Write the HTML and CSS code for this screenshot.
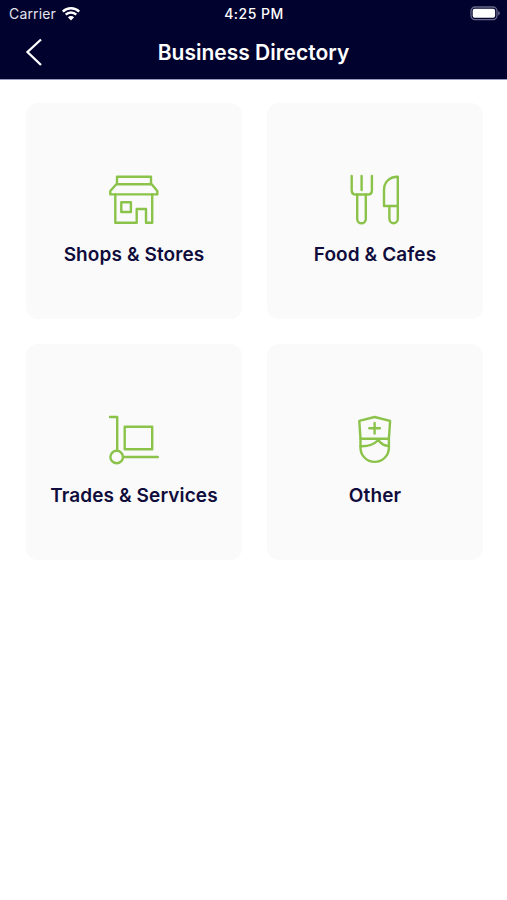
FILE: index.html
```html
<!DOCTYPE html>
<html lang="en">
<head>
  <meta charset="UTF-8">
  <meta name="viewport" content="width=device-width, initial-scale=1.0">
  <title>Business Directory</title>
  <link rel="stylesheet" href="styles.css">
</head>
<body>
  <header class="header">
    <div class="status-bar">
      <div class="carrier">
        <span>Carrier</span>
        <svg class="wifi" width="20" height="16" viewBox="0 0 20 16">
          <path d="M1.8 5.6a11.6 11.6 0 0 1 16.4 0" />
          <path d="M4.7 8.7a7.5 7.5 0 0 1 10.6 0" />
          <path class="wifi-dot" d="M6.9 11.2a4.4 4.4 0 0 1 6.2 0L10 14.4z" />
        </svg>
      </div>
      <span class="time">4:25 PM</span>
      <svg class="battery" width="31" height="15" viewBox="0 0 31 15">
        <rect class="battery-case" x="2" y="1" width="26" height="12.6" rx="4" />
        <rect class="battery-level" x="3.7" y="2.8" width="22.4" height="9" rx="2" />
        <path class="battery-cap" d="M29.2 5v4.6q1.6-.6 1.600-2.300T29.200 5z" />
      </svg>
    </div>
    <div class="nav-bar">
      <a class="back" href="#" aria-label="Back">
        <svg width="18" height="30" viewBox="0 0 18 30">
          <path d="M16 2.500L2.500 15 16 28" />
        </svg>
      </a>
      <h1>Business Directory</h1>
    </div>
  </header>

  <main class="grid">
    <a class="card" href="#">
      <svg class="icon" width="69" height="70" viewBox="0 0 69 70">
        <path d="M17 19v-7.300h34V19" />
        <path d="M16.300 19.200h35.400l5.600 6.800v3.400H10.300V26z" />
        <path d="M15.300 29.400v28.300h21.400V44h9.300v13.700h6.200V29.400" />
        <rect x="21.300" y="37.200" width="9.600" height="9.800" />
      </svg>
      <span class="label">Shops &amp; Stores</span>
    </a>
    <a class="card" href="#">
      <svg class="icon" width="69" height="70" viewBox="0 0 69 70">
        <path d="M10.700 11v14.200q0 4.300 4.300 4.300h11.600q4.300 0 4.300-4.300V11M20.600 11v14" />
        <path d="M16.200 29.500V54a4.300 4.300 0 0 0 8.600 0V29.500" />
        <path d="M56.800 41H43V25c0-7 4.500-13.300 13.800-13.300V54a4.200 4.200 0 0 1-8.400 0V41" />
      </svg>
      <span class="label">Food &amp; Cafes</span>
    </a>
    <a class="card" href="#">
      <svg class="icon" width="69" height="70" viewBox="0 0 69 70">
        <path d="M10 11h7.200v33.500" />
        <rect x="24.700" y="20.700" width="27.500" height="22.600" />
        <circle cx="16.700" cy="51" r="6.300" />
        <path d="M23 51h34.800" />
      </svg>
      <span class="label">Trades &amp; Services</span>
    </a>
    <a class="card" href="#">
      <svg class="icon" width="69" height="70" viewBox="0 0 69 70">
        <path d="M18.300 14.900L33.600 11l15.500 3.900L47.900 32.700H19.500z" />
        <path d="M33.600 17v10.500M28.300 22.200h10.600" />
        <path d="M19.500 32.700v9a14.200 14.200 0 0 0 28.400 0v-9" />
        <path d="M19.500 40.200c7 .3 13.500-1.700 17.800-6.200 2.500 3.700 6.200 5.700 10.600 6" />
      </svg>
      <span class="label">Other</span>
    </a>
  </main>
</body>
</html>
```

FILE: styles.css
```css
:root {
  --navy: #02022e;
  --green: #8bc34a;
  --card: #fafafa;
}

* {
  box-sizing: border-box;
  margin: 0;
  padding: 0;
}

body {
  font-family: Inter, "Liberation Sans", sans-serif;
  color: #100c3c;
  background-color: #fff;
}

a {
  color: inherit;
  text-decoration: none;
}

svg {
  display: block;
  fill: none;
}

/* Header */
.header {
  height: 79px;
  color: #fff;
  background-color: var(--navy);
  box-shadow: 0 1px 0 #9a9abb;
}

.status-bar {
  display: grid;
  grid-template-columns: 1fr auto 1fr;
  align-items: center;
  height: 27px;
  padding: 0 7px 0 9px;
  font-size: 14px;
}

.carrier {
  display: flex;
  align-items: center;
  gap: 5px;
  letter-spacing: 0.15px;
  color: #e4e4ee;
}

.wifi {
  stroke: #fff;
  stroke-width: 2.4;
}

.wifi-dot {
  fill: #fff;
  stroke: none;
}

.time {
  margin-right: 1px;
  font-weight: 500;
  letter-spacing: 0.5px;
}

.battery {
  justify-self: end;
}

.battery-case {
  stroke: #68688a;
  stroke-width: 1.3;
}

.battery-level {
  fill: #fff;
}

.battery-cap {
  fill: #68688a;
}

.nav-bar {
  display: grid;
  grid-template-columns: 60px 1fr 60px;
  align-items: center;
  height: 50px;
}

.back {
  padding-left: 25px;
}

.back path {
  stroke: #fff;
  stroke-width: 2.3;
}

.nav-bar h1 {
  text-align: center;
  font-size: 21px;
  font-weight: 600;
}

/* Category cards */
.grid {
  display: grid;
  grid-template-columns: 216px 216px;
  gap: 25px;
  padding: 24px 24px 24px 26px;
}

.card {
  display: flex;
  flex-direction: column;
  align-items: center;
  height: 216px;
  padding-top: 62px;
  border-radius: 12px;
  background-color: var(--card);
}

.icon {
  stroke: var(--green);
  stroke-width: 2.4;
  stroke-linecap: round;
  stroke-linejoin: round;
}

.label {
  margin-top: 8px;
  font-size: 19px;
  font-weight: 600;
  line-height: 24px;
  letter-spacing: 0.1px;
}
```
